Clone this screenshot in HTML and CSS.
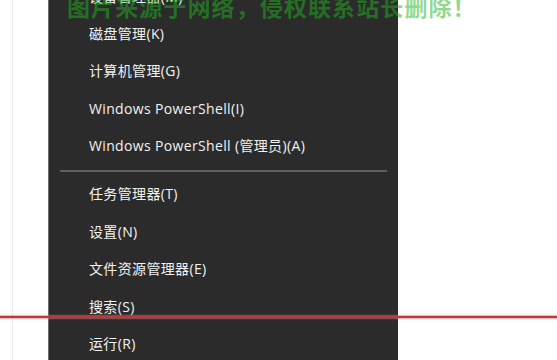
FILE: index.html
```html
<!DOCTYPE html>
<html lang="zh-CN">
<head>
<meta charset="utf-8">
<title>Win+X 菜单</title>
<link rel="stylesheet" href="styles.css">
</head>
<body>
<div class="page">
  <div class="guide"></div>
  <nav class="menu">
    <ul class="group">
      <li class="item">设备管理器(M)</li>
      <li class="item">磁盘管理(K)</li>
      <li class="item">计算机管理(G)</li>
      <li class="item">Windows PowerShell(I)</li>
      <li class="item">Windows PowerShell (管理员)(A)</li>
    </ul>
    <div class="sep"></div>
    <ul class="group">
      <li class="item">任务管理器(T)</li>
      <li class="item">设置(N)</li>
      <li class="item">文件资源管理器(E)</li>
      <li class="item">搜索(S)</li>
      <li class="item">运行(R)</li>
    </ul>
  </nav>
</div>
<div class="watermark">图片来源于网络，侵权联系站长删除！</div>
<div class="redline"></div>
</body>
</html>
```

FILE: styles.css
```css
html, body {
  margin: 0;
  padding: 0;
  background: #ffffff;
  width: 557px;
  height: 360px;
  overflow: hidden;
}
.page {
  display: flex;
  height: 360px;
  font-family: "Open Sans", "Noto Sans CJK SC", sans-serif;
}
.guide {
  width: 1px;
  margin-left: 12px;
  background: #ececec;
}
.menu {
  margin-left: 35px;
  width: 349px;
  height: 360px;
  background: #2b2b2b;
  border-left: 1px solid #6e6e6e;
  overflow: hidden;
}
.group {
  list-style: none;
  margin: 0;
  padding: 0;
}
.group:first-child {
  margin-top: -22px;
}
.item {
  height: 37.5px;
  line-height: 37.5px;
  padding-left: 40px;
  color: #f2f2f2;
  font-size: 14px;
  letter-spacing: 0.35px;
  white-space: nowrap;
}
.group:first-child .item:nth-child(2) {
  margin-top: -1px;
}
.sep {
  height: 2px;
  margin: 5px 11px 3.5px 11px;
  background: #5f5f5f;
}
.watermark {
  position: absolute;
  left: 67px;
  top: -11px;
  font-family: "Noto Sans CJK SC", sans-serif;
  font-weight: 700;
  font-size: 23px;
  letter-spacing: 1.1px;
  color: rgba(30, 180, 30, 0.5);
  white-space: nowrap;
}
.redline {
  position: absolute;
  left: 0;
  top: 316px;
  width: 557px;
  height: 2px;
  background: #b83a3a;
  box-shadow: 0 0 1.5px 1px rgba(220, 110, 110, 0.6);
}
```
